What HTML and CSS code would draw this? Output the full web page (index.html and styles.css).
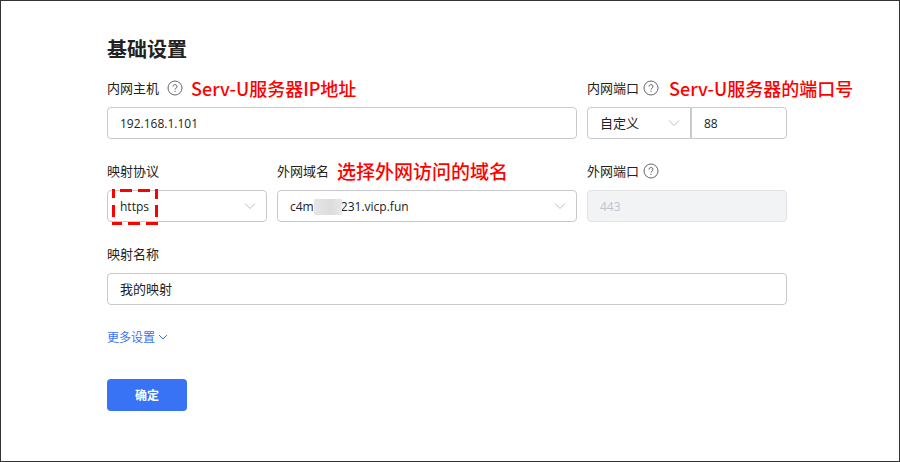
FILE: index.html
```html
<!DOCTYPE html>
<html lang="zh-CN">
<head>
  <meta charset="UTF-8">
  <meta name="viewport" content="width=device-width, initial-scale=1.0">
  <title>基础设置</title>
  <link rel="stylesheet" href="styles.css">
</head>
<body>
  <main class="page">
    <h1>基础设置</h1>
    <form class="settings">
      <div class="grid">
        <div class="field span-2">
          <div class="label-row">
            <label for="host">内网主机</label>
            <svg class="help" viewBox="0 0 16 16"><circle cx="8" cy="8" r="7"/><path d="M6 6.6a2 2 0 1 1 2.9 1.7c-.6.3-.9.6-.9 1.3"/><path d="M8 10.8v1.2"/></svg>
            <span class="note">Serv-U服务器IP地址</span>
          </div>
          <input class="control latin" id="host" type="text" value="192.168.1.101">
        </div>

        <div class="field">
          <div class="label-row label-row-tight">
            <label for="port">内网端口</label>
            <svg class="help" viewBox="0 0 16 16"><circle cx="8" cy="8" r="7"/><path d="M6 6.6a2 2 0 1 1 2.9 1.7c-.6.3-.9.6-.9 1.3"/><path d="M8 10.8v1.2"/></svg>
            <span class="note">Serv-U服务器的端口号</span>
          </div>
          <div class="port-group">
            <div class="select">
              <select class="control" aria-label="端口类型">
                <option>自定义</option>
              </select>
              <svg class="arrow" viewBox="0 0 12 8"><path d="M1 1.5l5 5 5-5"/></svg>
            </div>
            <input class="control latin" id="port" type="text" value="88">
          </div>
        </div>

        <div class="field">
          <div class="label-row">
            <label for="protocol">映射协议</label>
          </div>
          <div class="select">
            <select class="control latin" id="protocol">
              <option>https</option>
            </select>
            <svg class="arrow" viewBox="0 0 12 8"><path d="M1 1.5l5 5 5-5"/></svg>
            <svg class="highlight" viewBox="0 0 46 36">
              <path d="M8 1.5h12M26 1.5h12"/>
              <path d="M0 34.5h10M16 34.5h12M34 34.5h12"/>
              <path d="M1.5 0v9M1.5 16v12"/>
              <path d="M44.5 0v10M44.5 16v12"/>
            </svg>
          </div>
        </div>

        <div class="field">
          <div class="label-row">
            <label for="domain">外网域名</label>
            <span class="note note-large">选择外网访问的域名</span>
          </div>
          <div class="select">
            <select class="control latin" id="domain">
              <option>c4m&emsp;&emsp;&nbsp;231.vicp.fun</option>
            </select>
            <svg class="arrow" viewBox="0 0 12 8"><path d="M1 1.5l5 5 5-5"/></svg>
            <span class="mask"></span>
          </div>
        </div>

        <div class="field">
          <div class="label-row label-row-tight">
            <label for="public-port">外网端口</label>
            <svg class="help" viewBox="0 0 16 16"><circle cx="8" cy="8" r="7"/><path d="M6 6.6a2 2 0 1 1 2.9 1.7c-.6.3-.9.6-.9 1.3"/><path d="M8 10.8v1.2"/></svg>
          </div>
          <input class="control latin" id="public-port" type="text" value="443" disabled>
        </div>

        <div class="field span-3">
          <div class="label-row">
            <label for="name">映射名称</label>
          </div>
          <input class="control" id="name" type="text" value="我的映射">
        </div>
      </div>

      <a class="more" href="#">更多设置<svg viewBox="0 0 10 8"><path d="M1 2l4 4 4-4"/></svg></a>
      <button class="submit" type="submit">确定</button>
    </form>
  </main>
</body>
</html>
```

FILE: styles.css
```css
* {
  box-sizing: border-box;
}
body {
  margin: 0;
  font-family: "Noto Sans CJK SC", sans-serif;
  font-size: 13px;
  color: #222;
  background: #fff;
}
.page {
  min-height: 100vh;
  padding: 34px 112px 50px 106px;
  border: 1px solid #333;
}
h1 {
  margin: 0 0 15px;
  font-size: 20px;
  line-height: 28px;
  font-weight: 700;
}
.settings {
  display: flex;
  flex-direction: column;
  align-items: flex-start;
}
.grid {
  display: grid;
  grid-template-columns: 160px 1fr 200px;
  gap: 22px 10px;
  width: 100%;
}
.span-2 {
  grid-column: span 2;
}
.span-3 {
  grid-column: span 3;
}
.field {
  display: flex;
  flex-direction: column;
  gap: 9px;
  min-width: 0;
}
.label-row {
  display: flex;
  align-items: center;
  gap: 8px;
  height: 20px;
  line-height: 20px;
  white-space: nowrap;
}
.label-row-tight {
  gap: 4px;
}
.label-row-tight .note {
  margin-left: 6px;
}
.help {
  flex: none;
  width: 16px;
  height: 16px;
  fill: none;
  stroke: #666;
  stroke-width: 1;
}
.note {
  font-size: 18px;
  font-weight: 500;
  color: #f00;
}
.note-large {
  font-size: 19px;
}
.control {
  display: block;
  width: 100%;
  height: 32px;
  margin: 0;
  padding: 0 12px 2px;
  border: 1px solid #c8c9cc;
  border-radius: 4px;
  background: #fff;
  font-family: inherit;
  font-size: 13px;
  color: #222;
  appearance: none;
}
.latin {
  padding-bottom: 0;
  font-family: "Open Sans", "Noto Sans CJK SC", sans-serif;
  font-size: 12px;
}
.control:disabled {
  border-color: #e0e2e8;
  background: #f1f3f5;
  color: #c0c4cc;
  opacity: 1;
}
.select {
  position: relative;
}
.arrow {
  position: absolute;
  top: 12px;
  right: 11px;
  width: 12px;
  height: 8px;
  fill: none;
  stroke: #b8bcc6;
  pointer-events: none;
}
.port-group {
  display: grid;
  grid-template-columns: 104px 1fr;
}
.port-group select {
  border-top-right-radius: 0;
  border-bottom-right-radius: 0;
}
.port-group input {
  border-top-left-radius: 0;
  border-bottom-left-radius: 0;
}
.highlight {
  position: absolute;
  top: -1px;
  left: 5px;
  width: 46px;
  height: 36px;
  fill: none;
  stroke: #f00;
  stroke-width: 3;
  pointer-events: none;
}
.mask {
  position: absolute;
  top: 9px;
  left: 37px;
  width: 28px;
  height: 16px;
  background: linear-gradient(90deg, #e6e6e6, #dcdcdc 60%, #e8e8e8);
}
.more {
  display: flex;
  align-items: center;
  gap: 3px;
  margin-top: 22px;
  font-size: 12px;
  line-height: 20px;
  color: #3873f6;
  text-decoration: none;
}
.more svg {
  width: 10px;
  height: 8px;
  fill: none;
  stroke: #3873f6;
}
.submit {
  width: 80px;
  height: 32px;
  margin-top: 32px;
  padding: 0 0 2px;
  border: 0;
  border-radius: 4px;
  background: #3873f6;
  font-family: inherit;
  font-size: 12px;
  font-weight: 700;
  color: #fff;
}
```
